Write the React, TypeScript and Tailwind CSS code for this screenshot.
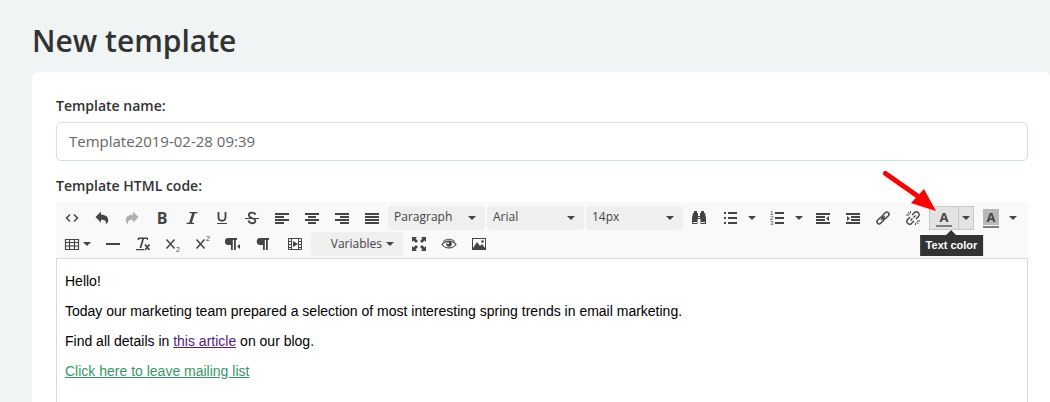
import { useState } from 'react'
import type { ReactNode } from 'react'

const uiFont = "font-['Open_Sans','Noto_Sans',sans-serif]"
const bodyFont = "font-['Liberation_Sans',Arial,sans-serif]"

function Icon({ children, className = '' }: { children: ReactNode; className?: string }) {
  return (
    <svg
      width="16"
      height="16"
      viewBox="0 0 16 16"
      fill="currentColor"
      aria-hidden="true"
      className={`shrink-0 ${className}`}
    >
      {children}
    </svg>
  )
}

function Caret({ className = '' }: { className?: string }) {
  return (
    <svg width="8" height="4" viewBox="0 0 8 4" fill="currentColor" aria-hidden="true" className={className}>
      <path d="M0 0h8L4 4z" />
    </svg>
  )
}

// Four horizontal bars, each given as [x, width]
function Lines({ rows }: { rows: number[][] }) {
  return (
    <Icon>
      {rows.map(([x, w], i) => (
        <rect key={i} x={x} y={3 + i * 3} width={w} height="2" />
      ))}
    </Icon>
  )
}

function Tool({ label, children, disabled }: { label: string; children: ReactNode; disabled?: boolean }) {
  return (
    <button
      type="button"
      aria-label={label}
      disabled={disabled}
      className="flex h-6 w-[30px] items-center justify-center disabled:opacity-40"
    >
      {children}
    </button>
  )
}

function SplitTool({
  label,
  children,
  active,
}: {
  label: string
  children: ReactNode
  active?: boolean
}) {
  return (
    <div
      className={`mx-px flex h-6 w-[45px] border ${
        active ? 'border-[#c9c9c9] bg-[#e3e3e3]' : 'border-transparent'
      }`}
    >
      <button type="button" aria-label={label} className="flex w-7 items-center justify-center">
        {children}
      </button>
      <button
        type="button"
        aria-label={`${label} options`}
        className={`flex grow items-center justify-center border-l ${
          active ? 'border-[#c9c9c9]' : 'border-transparent'
        }`}
      >
        <Caret />
      </button>
    </div>
  )
}

function Dropdown({ label, options }: { label: string; options: string[] }) {
  return (
    <div className="relative mx-px w-[97px]">
      <select
        aria-label={label}
        className="block h-6 w-full appearance-none rounded-sm bg-[#efefef] pb-0.5 pl-1.5 text-xs text-[#444]"
      >
        {options.map((option) => (
          <option key={option}>{option}</option>
        ))}
      </select>
      <Caret className="pointer-events-none absolute top-2.5 right-[9px]" />
    </div>
  )
}

function Paragraph({ arrow }: { arrow?: boolean }) {
  return (
    <Icon>
      <path
        d="M5 2h9v2h-1.200v10h-1.800V4H9.800v10H8V9H5.500a3.500 3.500 0 0 1-.5-7z"
        transform={arrow ? 'translate(-2 0)' : undefined}
      />
      {arrow && <path d="M15 8v5l-3-2.500z" />}
    </Icon>
  )
}

function Toolbar() {
  return (
    <div
      role="toolbar"
      aria-label="Editor tools"
      className="flex flex-wrap gap-y-0.5 bg-[#f9f9f9] pt-1 pb-0.5 pl-px text-[#444]"
    >
      <Tool label="View HTML">
        <Icon>
          <path d="M6 4.500L2.500 8 6 11.500M10 4.500L13.500 8 10 11.500" fill="none" stroke="currentColor" strokeWidth="1.500" />
        </Icon>
      </Tool>
      <Tool label="Undo">
        <Icon>
          <path d="M7 1.500v3.200c5 0 7.500 2.300 7.200 5.800-.1 1.700-1 3-2.400 3.700.7-3.200-.8-4.500-4.800-4.500v3L1.500 7z" />
        </Icon>
      </Tool>
      <Tool label="Redo" disabled>
        <Icon>
          <path d="M9 1.500v3.200c-5 0-7.500 2.300-7.200 5.800.1 1.700 1 3 2.400 3.700-.7-3.200.8-4.500 4.800-4.500v3L14.500 7z" />
        </Icon>
      </Tool>
      <Tool label="Bold">
        <span className="text-base leading-none font-bold">B</span>
      </Tool>
      <Tool label="Italic">
        <Icon>
          <path d="M5.500 2h8v1.200h-2.600L7.800 12.800H10V14H2.500v-1.200h2.600L8.200 3.200H5.500z" />
        </Icon>
      </Tool>
      <Tool label="Underline">
        <Icon>
          <path d="M4.500 2v5c0 5 7 5 7 0V2" fill="none" stroke="currentColor" strokeWidth="1.800" />
          <path d="M3 13h10v1H3z" />
        </Icon>
      </Tool>
      <Tool label="Strikethrough">
        <Icon>
          <path
            d="M11.500 4.700C10.500 2 5 2 4.800 5c0 4 6.600 2.500 6.600 5.800 0 3.400-6 3.200-7-.3"
            fill="none"
            stroke="currentColor"
            strokeWidth="1.800"
          />
          <path d="M1 8h14v1H1z" />
        </Icon>
      </Tool>
      <Tool label="Align left">
        <Lines rows={[[1, 14], [1, 9], [1, 14], [1, 9]]} />
      </Tool>
      <Tool label="Align center">
        <Lines rows={[[1, 14], [4, 8], [1, 14], [4, 8]]} />
      </Tool>
      <Tool label="Align right">
        <Lines rows={[[1, 14], [6, 9], [1, 14], [6, 9]]} />
      </Tool>
      <Tool label="Justify">
        <Lines rows={[[1, 14], [1, 14], [1, 14], [1, 14]]} />
      </Tool>

      <Dropdown label="Format" options={['Paragraph', 'Heading 1', 'Heading 2']} />
      <Dropdown label="Font family" options={['Arial', 'Georgia', 'Verdana']} />
      <Dropdown label="Font size" options={['14px', '16px', '18px']} />

      <Tool label="Find">
        <Icon>
          <path d="M3 1h3v2h1v3h2V3h1V1h3v2h1l1 5v6h-5.500V9h-3v5H1V8l1-5h1z" />
          <path d="M2 12h4v1H2zM10 12h4v1h-4zM7 7h2v1H7z" fill="#f9f9f9" />
        </Icon>
      </Tool>
      <SplitTool label="Bulleted list">
        <Icon>
          <path d="M2 2h2v2H2zM2 7h2v2H2zM2 12h2v2H2zM6 2h9v2H6zM6 7h9v2H6zM6 12h9v2H6z" />
        </Icon>
      </SplitTool>
      <SplitTool label="Numbered list">
        <Icon>
          <path d="M6 2h9v2H6zM6 7h9v2H6zM6 12h9v2H6z" />
          <g fontSize="6" fontFamily="Liberation Sans">
            <text x="1" y="5">1</text>
            <text x="1" y="10">2</text>
            <text x="1" y="15">3</text>
          </g>
        </Icon>
      </SplitTool>
      <Tool label="Outdent">
        <Icon>
          <path d="M1 3h14v2H1zM1 6h9v2H1zM1 9h9v2H1zM1 12h14v2H1zM14 6v5l-3-2.500z" />
        </Icon>
      </Tool>
      <Tool label="Indent">
        <Icon>
          <path d="M1 3h14v2H1zM6 6h9v2H6zM6 9h9v2H6zM1 12h14v2H1zM2 6v5l3-2.500z" />
        </Icon>
      </Tool>
      <Tool label="Insert link">
        <Icon>
          <g fill="none" stroke="currentColor" strokeWidth="1.400">
            <rect x="6.600" y="3.300" width="8" height="4.400" rx="2.200" transform="rotate(-45 10.600 5.500)" />
            <rect x="1.400" y="8.300" width="8" height="4.400" rx="2.200" transform="rotate(-45 5.400 10.500)" />
            <path d="M6 10l4-4" />
          </g>
        </Icon>
      </Tool>
      <Tool label="Remove link">
        <Icon>
          <g fill="none" stroke="currentColor" strokeWidth="1.400">
            <path d="M7 5l2.600-2.600c2.400-2 5.800 1 4 3.800L11 9M9 11l-2.600 2.600c-2.400 2-5.800-1-4-3.800L5 7M8.500 7.500l2-2M5.500 10.500l2-2" />
            <path d="M3 2l2 2.500M1 5h3M5.500 1v2M10.500 13v2M12 11h3M11.500 12l2 2" strokeWidth="1" />
          </g>
        </Icon>
      </Tool>

      <div className="relative">
        <SplitTool label="Text color" active>
          <span className="w-4 border-b-2 border-[#808080] text-center text-[13px] leading-4 font-bold">A</span>
        </SplitTool>
        <div
          role="tooltip"
          className={`absolute top-[29px] left-1/2 z-10 -translate-x-1/2 bg-[#333] px-1.5 text-[11px] leading-[21px] font-bold whitespace-nowrap text-white ${bodyFont}`}
        >
          <svg
            width="10"
            height="5"
            viewBox="0 0 10 5"
            aria-hidden="true"
            className="absolute bottom-full left-1/2 -translate-x-1/2"
          >
            <path d="M5 0l5 5H0z" fill="#333" />
          </svg>
          Text color
        </div>
        {/* Callout arrow */}
        <svg
          width="56"
          height="44"
          viewBox="0 0 56 44"
          aria-hidden="true"
          className="pointer-events-none absolute right-[38px] bottom-[18px] z-10"
        >
          <path d="M4.500 5.500L38 29" stroke="#f00" strokeWidth="5" strokeLinecap="round" />
          <path d="M43 21l12 22-25-8z" fill="#f00" />
        </svg>
      </div>
      <SplitTool label="Background color">
        <span className="w-4 border-b-2 border-[#808080] bg-[#b8b8b8] text-center text-[13px] leading-4 font-bold">
          <span className="block border-b border-[#f9f9f9]">A</span>
        </span>
      </SplitTool>

      <button type="button" aria-label="Create table" className="flex h-6 w-[41px] items-center gap-[3px] pl-[7px]">
        <Icon>
          <path
            d="M1.500 3.500h13v10h-13zM1 6.500h14M1 10h14M5.500 3v11M10.500 3v11"
            fill="none"
            stroke="currentColor"
            strokeWidth="1.200"
          />
        </Icon>
        <Caret />
      </button>
      <Tool label="Horizontal line">
        <Icon>
          <path d="M1 7h14v2H1z" />
        </Icon>
      </Tool>
      <Tool label="Clear formatting">
        <Icon>
          <path d="M3 1.500h10v2.500h-1v-1H9L6.300 12H4.500l2.700-9H4.500L4 4H2.500zM1 13h8v1.200H1z" />
          <path d="M10 8.500l4.500 5.500M14.500 8.500L10 14" fill="none" stroke="currentColor" strokeWidth="1.700" />
        </Icon>
      </Tool>
      <Tool label="Subscript">
        <Icon>
          <path d="M1.500 3.500l8 9M9.500 3.500l-8 9" fill="none" stroke="currentColor" strokeWidth="1.500" />
          <text x="11" y="16" fontSize="7" fontFamily="Liberation Sans">2</text>
        </Icon>
      </Tool>
      <Tool label="Superscript">
        <Icon>
          <path d="M1.500 3.500l8 9M9.500 3.500l-8 9" fill="none" stroke="currentColor" strokeWidth="1.500" />
          <text x="11" y="5" fontSize="7" fontFamily="Liberation Sans">2</text>
        </Icon>
      </Tool>
      <Tool label="Right to left">
        <Paragraph arrow />
      </Tool>
      <Tool label="Left to right">
        <Paragraph />
      </Tool>
      <Tool label="Insert video">
        <Icon className="ml-1">
          <path
            d="M1.500 2.500h13v11h-13zM4.500 2.500v11M11.500 2.500v11M1.500 5.500h3M1.500 8.500h3M1.500 11.500h3M11.500 5.500h3M11.500 8.500h3M11.500 11.500h3"
            fill="none"
            stroke="currentColor"
          />
          <path d="M6 5l5 3-5 3z" />
        </Icon>
      </Tool>
      <button
        type="button"
        className="mr-px ml-[3px] flex h-6 w-[92px] items-center justify-end gap-1 rounded-sm bg-[#efefef] pr-[9px] text-xs"
      >
        Variables
        <Caret />
      </button>
      <Tool label="Full screen">
        <Icon>
          <path d="M1 1h5L4.500 2.500l2.500 2.500-2 2-2.500-2.500L1 6zM15 1v5l-1.500-1.500L11 7 9 5l2.500-2.500L10 1zM1 15v-5l1.500 1.500L5 9l2 2-2.500 2.500L6 15zM15 15h-5l1.500-1.500L9 11l2-2 2.500 2.500L15 10z" />
        </Icon>
      </Tool>
      <Tool label="Preview">
        <Icon>
          <path d="M1 8.500c3.500-4.600 10.500-4.600 14 0-3.500 4.600-10.500 4.600-14 0z" fill="none" stroke="currentColor" strokeWidth="1.200" />
          <path d="M2 5.500c4-3 8-3 12 0" fill="none" stroke="currentColor" />
          <circle cx="8" cy="8" r="2.800" />
          <circle cx="7" cy="7.200" r="1" fill="#f9f9f9" />
        </Icon>
      </Tool>
      <Tool label="Insert image">
        <Icon>
          <path d="M1 2h14v12H1zM2 3v10h12V3z" fillRule="evenodd" />
          <path d="M2 12l4-6 3 4 2-2 3 4v1H2z" />
          <circle cx="11.500" cy="5.500" r="1.300" />
        </Icon>
      </Tool>
    </div>
  )
}

export default function App() {
  const [name, setName] = useState('Template2019-02-28 09:39')

  return (
    <main className={`flex min-h-screen flex-col bg-[#f0f4f5] pl-8 text-[#333] ${uiFont}`}>
      <h1 className="pt-[21px] pb-[11px] text-[30px] leading-10 font-semibold">New template</h1>

      <div className="flex grow flex-col rounded-t-md bg-white pt-6 pr-[22px] pl-6">
        <label htmlFor="template-name" className="text-sm leading-5 font-semibold">
          Template name:
        </label>
        <input
          id="template-name"
          type="text"
          value={name}
          onChange={(e) => setName(e.target.value)}
          className="mt-1.5 h-[39px] w-full rounded-[5px] border border-[#d0e2e2] bg-white px-3 pb-0.5 text-[15px] text-[#666]"
        />

        <h2 className="mt-[15px] mb-1.5 text-sm leading-5 font-semibold">Template HTML code:</h2>
        <Toolbar />
        <div
          className={`flex grow flex-col gap-3.5 border border-b-0 border-[#d9d9d9] px-2 pt-3.5 text-sm leading-4 text-black ${bodyFont}`}
        >
          <p>Hello!</p>
          <p>Today our marketing team prepared a selection of most interesting spring trends in email marketing.</p>
          <p>
            Find all details in{' '}
            <a href="#article" className="text-[#551a8b] underline">
              this article
            </a>{' '}
            on our blog.
          </p>
          <p>
            <a href="#unsubscribe" className="text-[#339966] underline">
              Click here to leave mailing list
            </a>
          </p>
        </div>
      </div>
    </main>
  )
}
